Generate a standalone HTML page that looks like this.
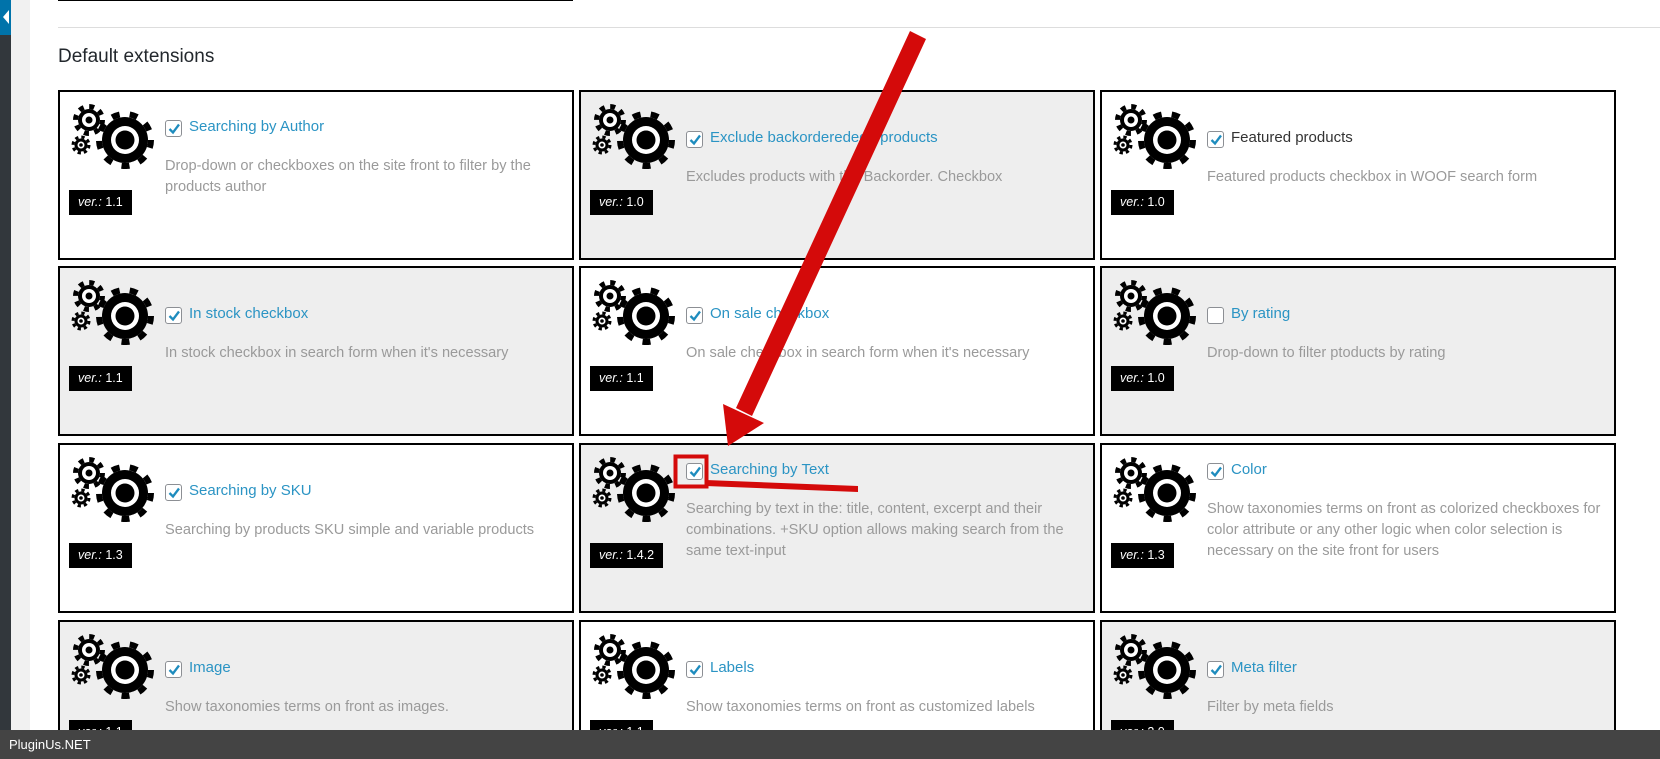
<!DOCTYPE html>
<html><head><meta charset="utf-8"><style>
*{margin:0;padding:0;box-sizing:border-box}
html,body{width:1660px;height:759px;overflow:hidden;background:#fff}
body{font-family:"Liberation Sans",sans-serif}
#w{position:relative;width:1660px;height:759px;overflow:hidden}
.side{position:absolute;left:0;top:0;width:11px;height:759px;background:#32373c}
.tab{position:absolute;left:0;top:0;width:11px;height:35px;background:#0073aa}
.strip{position:absolute;left:11px;top:0;width:19px;height:759px;background:#f1f1f1}
.card{position:absolute;width:516px;height:170px;border:2px solid #000;background:#fff}
.g{background:#eee}
.card svg{position:absolute;left:8px;top:8px}
.cb{position:absolute;left:105px;width:17px;height:17px;border:1px solid #8c8f94;border-radius:3px;background:#fff}
.cb svg{left:0px;top:0px}
.t{position:absolute;left:129px;font-size:15px;color:#2b94c4;white-space:nowrap}
.d{position:absolute;left:105px;width:400px;font-size:14.6px;line-height:21px;color:#9a9a9a}
.v{position:absolute;left:9px;top:98px;height:25px;background:#000;color:#fff;font-size:12.5px;line-height:25px;padding:0 9px}
.v i{font-style:italic}
.bar{position:absolute;left:0;top:730px;width:1660px;height:29px;background:#444;color:#fff;font-size:13px;line-height:29px;padding-left:9px}
</style></head><body><div id="w">
<div class="side"></div><div class="tab"></div>
<svg style="position:absolute;left:2px;top:10px" width="8" height="14"><path d="M7 0 L1 7 L7 14Z" fill="#fff"/></svg>
<div class="strip"></div>
<div style="position:absolute;left:58px;top:0;width:515px;height:1px;background:#000"></div>
<div style="position:absolute;left:58px;top:27px;width:1602px;height:1px;background:#ddd"></div>
<div style="position:absolute;left:58px;top:46px;font-size:19px;color:#23282d">Default extensions</div>

<svg width="0" height="0" style="position:absolute"><defs>
<g id="gear">
<circle cx="21" cy="20" r="11" fill="#000"/><circle cx="21" cy="20" r="13.5" fill="none" stroke="#000" stroke-width="5" stroke-dasharray="5 5.6"/>
<circle cx="21" cy="20" r="7" fill="#fff"/><circle cx="21" cy="20" r="3.5" fill="#000"/>
<circle cx="13" cy="45" r="6.5" fill="#000"/><circle cx="13" cy="45" r="8" fill="none" stroke="#000" stroke-width="3" stroke-dasharray="3.3 3"/>
<circle cx="13" cy="45" r="3.5" fill="#fff"/><circle cx="13" cy="45" r="1.8" fill="#000"/>
<circle cx="57" cy="40" r="23" fill="#000"/><circle cx="57" cy="40" r="26" fill="none" stroke="#000" stroke-width="6" stroke-dasharray="8 10.15"/>
<circle cx="57" cy="40" r="14" fill="#fff"/><circle cx="57" cy="40" r="9.5" fill="#000"/>
</g>
<g id="chk"><path d="M3.5 8 L7 11.5 L13 3.5" fill="none" stroke="#1e8cbe" stroke-width="2.3"/></g>
</defs></svg>

<div class="card" style="left:58px;top:90px"><svg width="90" height="75"><use href="#gear"/></svg><div class="cb" style="top:28px"><svg width="15" height="15"><use href="#chk"/></svg></div><div class="t" style="top:26px">Searching by Author</div><div class="d" style="top:64px">Drop-down or checkboxes on the site front to filter by the products author</div><div class="v"><i>ver.:</i> 1.1</div></div>
<div class="card g" style="left:579px;top:90px"><svg width="90" height="75"><use href="#gear"/></svg><div class="cb" style="top:39px"><svg width="15" height="15"><use href="#chk"/></svg></div><div class="t" style="top:37px">Exclude backorderedede products</div><div class="d" style="top:75px">Excludes products with the Backorder. Checkbox</div><div class="v"><i>ver.:</i> 1.0</div></div>
<div class="card" style="left:1100px;top:90px"><svg width="90" height="75"><use href="#gear"/></svg><div class="cb" style="top:39px"><svg width="15" height="15"><use href="#chk"/></svg></div><div class="t" style="top:37px;color:#333">Featured products</div><div class="d" style="top:75px">Featured products checkbox in WOOF search form</div><div class="v"><i>ver.:</i> 1.0</div></div>

<div class="card g" style="left:58px;top:266px"><svg width="90" height="75"><use href="#gear"/></svg><div class="cb" style="top:39px"><svg width="15" height="15"><use href="#chk"/></svg></div><div class="t" style="top:37px">In stock checkbox</div><div class="d" style="top:75px">In stock checkbox in search form when it's necessary</div><div class="v"><i>ver.:</i> 1.1</div></div>
<div class="card" style="left:579px;top:266px"><svg width="90" height="75"><use href="#gear"/></svg><div class="cb" style="top:39px"><svg width="15" height="15"><use href="#chk"/></svg></div><div class="t" style="top:37px">On sale checkbox</div><div class="d" style="top:75px">On sale checkbox in search form when it's necessary</div><div class="v"><i>ver.:</i> 1.1</div></div>
<div class="card g" style="left:1100px;top:266px"><svg width="90" height="75"><use href="#gear"/></svg><div class="cb" style="top:39px"></div><div class="t" style="top:37px">By rating</div><div class="d" style="top:75px">Drop-down to filter ptoducts by rating</div><div class="v"><i>ver.:</i> 1.0</div></div>

<div class="card" style="left:58px;top:443px"><svg width="90" height="75"><use href="#gear"/></svg><div class="cb" style="top:39px"><svg width="15" height="15"><use href="#chk"/></svg></div><div class="t" style="top:37px">Searching by SKU</div><div class="d" style="top:75px">Searching by products SKU simple and variable products</div><div class="v"><i>ver.:</i> 1.3</div></div>
<div class="card g" style="left:579px;top:443px"><svg width="90" height="75"><use href="#gear"/></svg><div class="cb" style="top:18px"><svg width="15" height="15"><use href="#chk"/></svg></div><div class="t" style="top:16px">Searching by Text</div><div class="d" style="top:54px">Searching by text in the: title, content, excerpt and their combinations. +SKU option allows making search from the same text-input</div><div class="v"><i>ver.:</i> 1.4.2</div></div>
<div class="card" style="left:1100px;top:443px"><svg width="90" height="75"><use href="#gear"/></svg><div class="cb" style="top:18px"><svg width="15" height="15"><use href="#chk"/></svg></div><div class="t" style="top:16px">Color</div><div class="d" style="top:54px">Show taxonomies terms on front as colorized checkboxes for color attribute or any other logic when color selection is necessary on the site front for users</div><div class="v"><i>ver.:</i> 1.3</div></div>

<div class="card g" style="left:58px;top:620px"><svg width="90" height="75"><use href="#gear"/></svg><div class="cb" style="top:39px"><svg width="15" height="15"><use href="#chk"/></svg></div><div class="t" style="top:37px">Image</div><div class="d" style="top:75px">Show taxonomies terms on front as images.</div><div class="v"><i>ver.:</i> 1.1</div></div>
<div class="card" style="left:579px;top:620px"><svg width="90" height="75"><use href="#gear"/></svg><div class="cb" style="top:39px"><svg width="15" height="15"><use href="#chk"/></svg></div><div class="t" style="top:37px">Labels</div><div class="d" style="top:75px">Show taxonomies terms on front as customized labels</div><div class="v"><i>ver.:</i> 1.1</div></div>
<div class="card g" style="left:1100px;top:620px"><svg width="90" height="75"><use href="#gear"/></svg><div class="cb" style="top:39px"><svg width="15" height="15"><use href="#chk"/></svg></div><div class="t" style="top:37px">Meta filter</div><div class="d" style="top:75px">Filter by meta fields</div><div class="v"><i>ver.:</i> 2.0</div></div>

<svg style="position:absolute;left:0;top:0" width="1660" height="759">
<polygon points="926,39 910,31 736,408 752,416" fill="#d40a0a"/>
<polygon points="723,404 764,423 728,446" fill="#d40a0a"/>
<rect x="675.5" y="456.5" width="31" height="30" fill="none" stroke="#d40a0a" stroke-width="4"/>
<polygon points="706,480 858,486 858,492 706,486" fill="#d40a0a"/>
</svg>
<div class="bar">PluginUs.NET</div>
</div></body></html>
